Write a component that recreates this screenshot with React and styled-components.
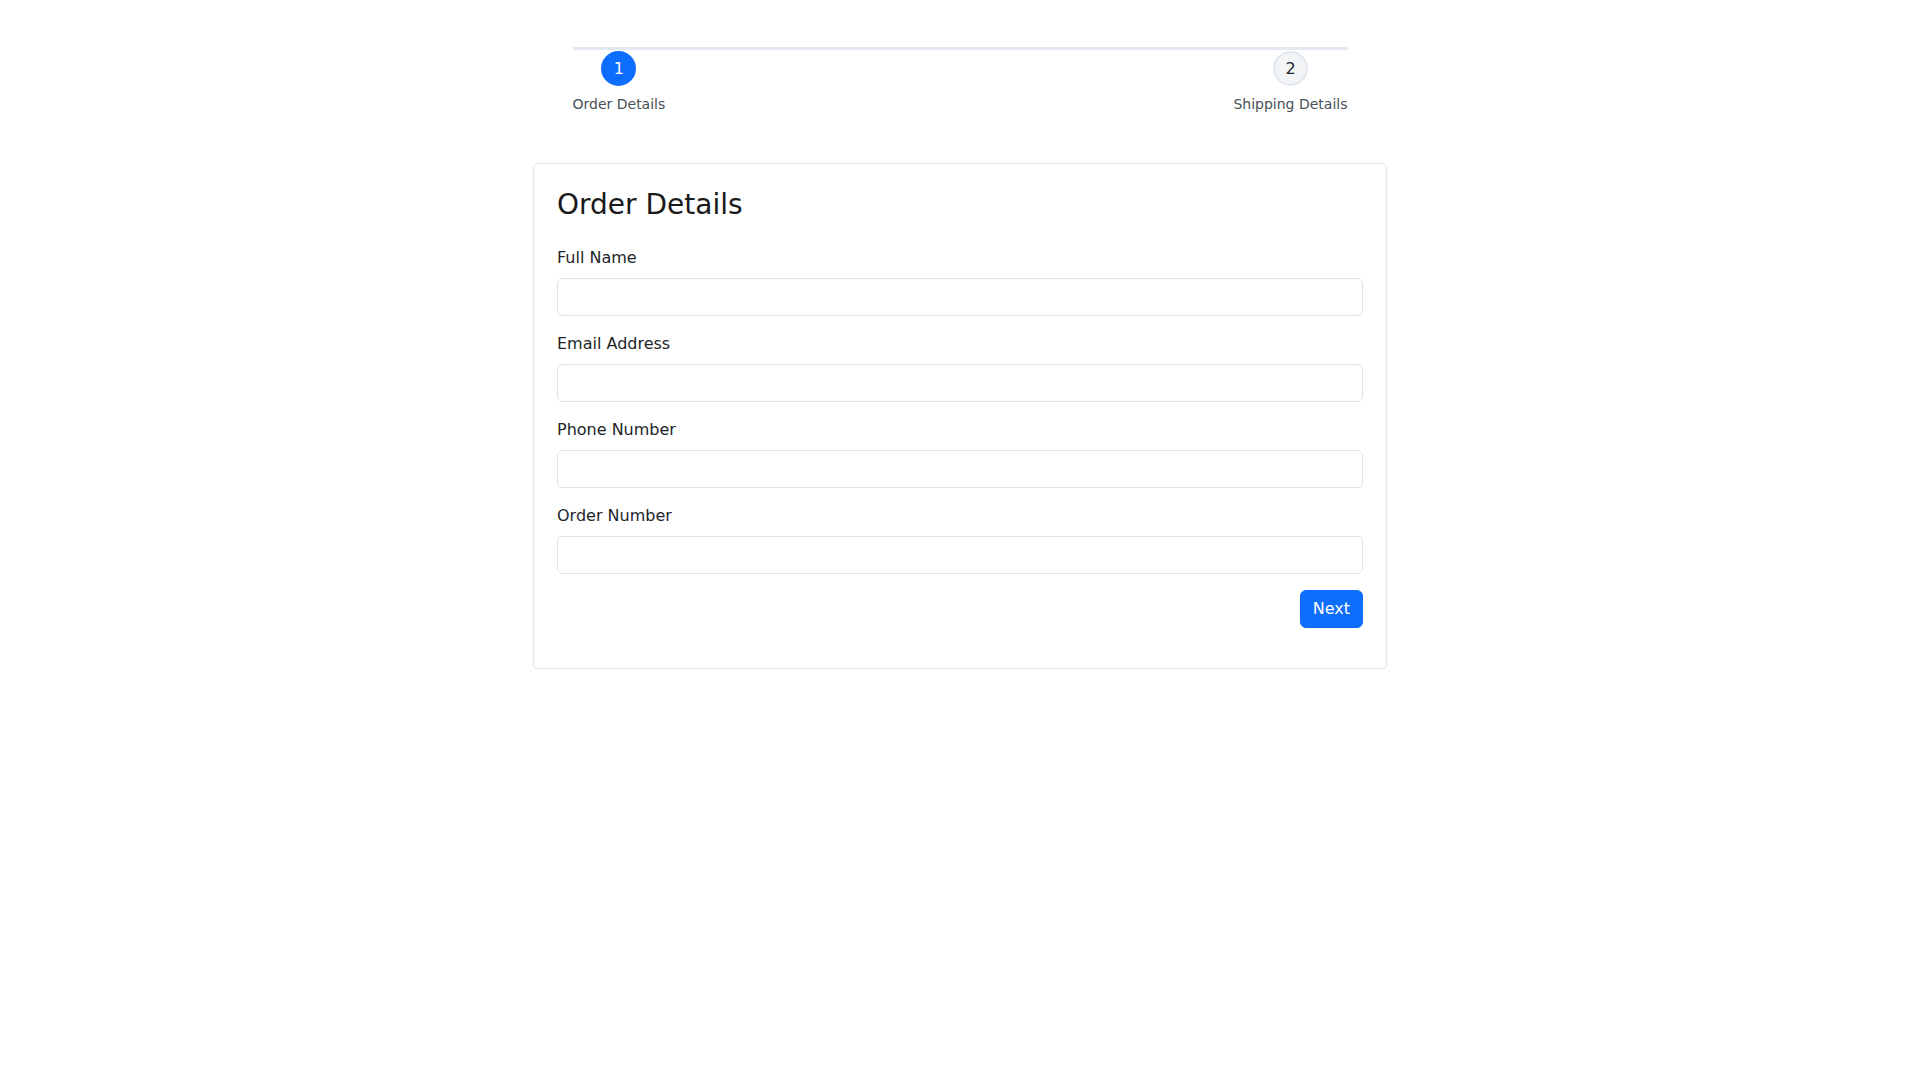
import React from "react";
import styled, { createGlobalStyle } from "styled-components";

const GlobalStyle = createGlobalStyle`
  body {
    margin: 0;
    background: #ffffff;
    font-family: "DejaVu Sans", "Liberation Sans", sans-serif;
    color: #212529;
  }
  * {
    box-sizing: border-box;
  }
`;

const Page = styled.div`
  padding-top: 47px;
`;

const Stepper = styled.div`
  width: 775px;
  margin: 0 auto 49px;
`;

const Track = styled.div`
  height: 3px;
  background: #e2e8f0;
  border-radius: 2px;
`;

const Steps = styled.div`
  display: flex;
  justify-content: space-between;
`;

const Step = styled.div`
  display: flex;
  flex-direction: column;
  align-items: center;
`;

const Circle = styled.div`
  width: 35px;
  height: 35px;
  margin-top: 1px;
  border-radius: 50%;
  display: flex;
  align-items: center;
  justify-content: center;
  font-size: 16px;
  background: ${(p) => (p.active ? "#0d6efd" : "#f3f4f6")};
  color: ${(p) => (p.active ? "#ffffff" : "#212529")};
  border: 2px solid ${(p) => (p.active ? "#0d6efd" : "#e2e8f0")};
`;

const StepLabel = styled.div`
  margin-top: 8px;
  font-size: 14px;
  line-height: 20px;
  color: #495057;
`;

const Card = styled.div`
  width: 854px;
  margin: 0 auto;
  padding: 24px 23px;
  background: #ffffff;
  border: 1px solid #e3e6ea;
  border-radius: 5px;
  box-shadow: 0 1px 4px rgba(0, 0, 0, 0.06);
`;

const Title = styled.h3`
  margin: 0 0 24px;
  font-size: 28px;
  font-weight: 400;
  line-height: 1.2;
  color: #1a1a1a;
`;

const Field = styled.div`
  margin-bottom: 16px;
`;

const Label = styled.label`
  display: block;
  margin-bottom: 8px;
  font-size: 16px;
  line-height: 24px;
`;

const Input = styled.input`
  display: block;
  width: 100%;
  height: 38px;
  padding: 6px 12px;
  font-family: inherit;
  font-size: 16px;
  border: 1px solid #dee2e6;
  border-radius: 6px;
  outline: none;
`;

const Actions = styled.div`
  display: flex;
  justify-content: flex-end;
  margin-bottom: 16px;
`;

const Button = styled.button`
  height: 38px;
  padding: 6px 12px;
  font-family: inherit;
  font-size: 16px;
  line-height: 24px;
  color: #ffffff;
  background: #0d6efd;
  border: 1px solid #0d6efd;
  border-radius: 6px;
  cursor: pointer;
`;

const steps = ["Order Details", "Shipping Details"];
const fields = ["Full Name", "Email Address", "Phone Number", "Order Number"];

export default function App() {
  return (
    <Page>
      <GlobalStyle />
      <Stepper>
        <Track />
        <Steps>
          {steps.map((s, i) => (
            <Step key={s}>
              <Circle active={i === 0}>{i + 1}</Circle>
              <StepLabel>{s}</StepLabel>
            </Step>
          ))}
        </Steps>
      </Stepper>
      <Card>
        <Title>Order Details</Title>
        {fields.map((f) => (
          <Field key={f}>
            <Label>{f}</Label>
            <Input type="text" />
          </Field>
        ))}
        <Actions>
          <Button>Next</Button>
        </Actions>
      </Card>
    </Page>
  );
}
